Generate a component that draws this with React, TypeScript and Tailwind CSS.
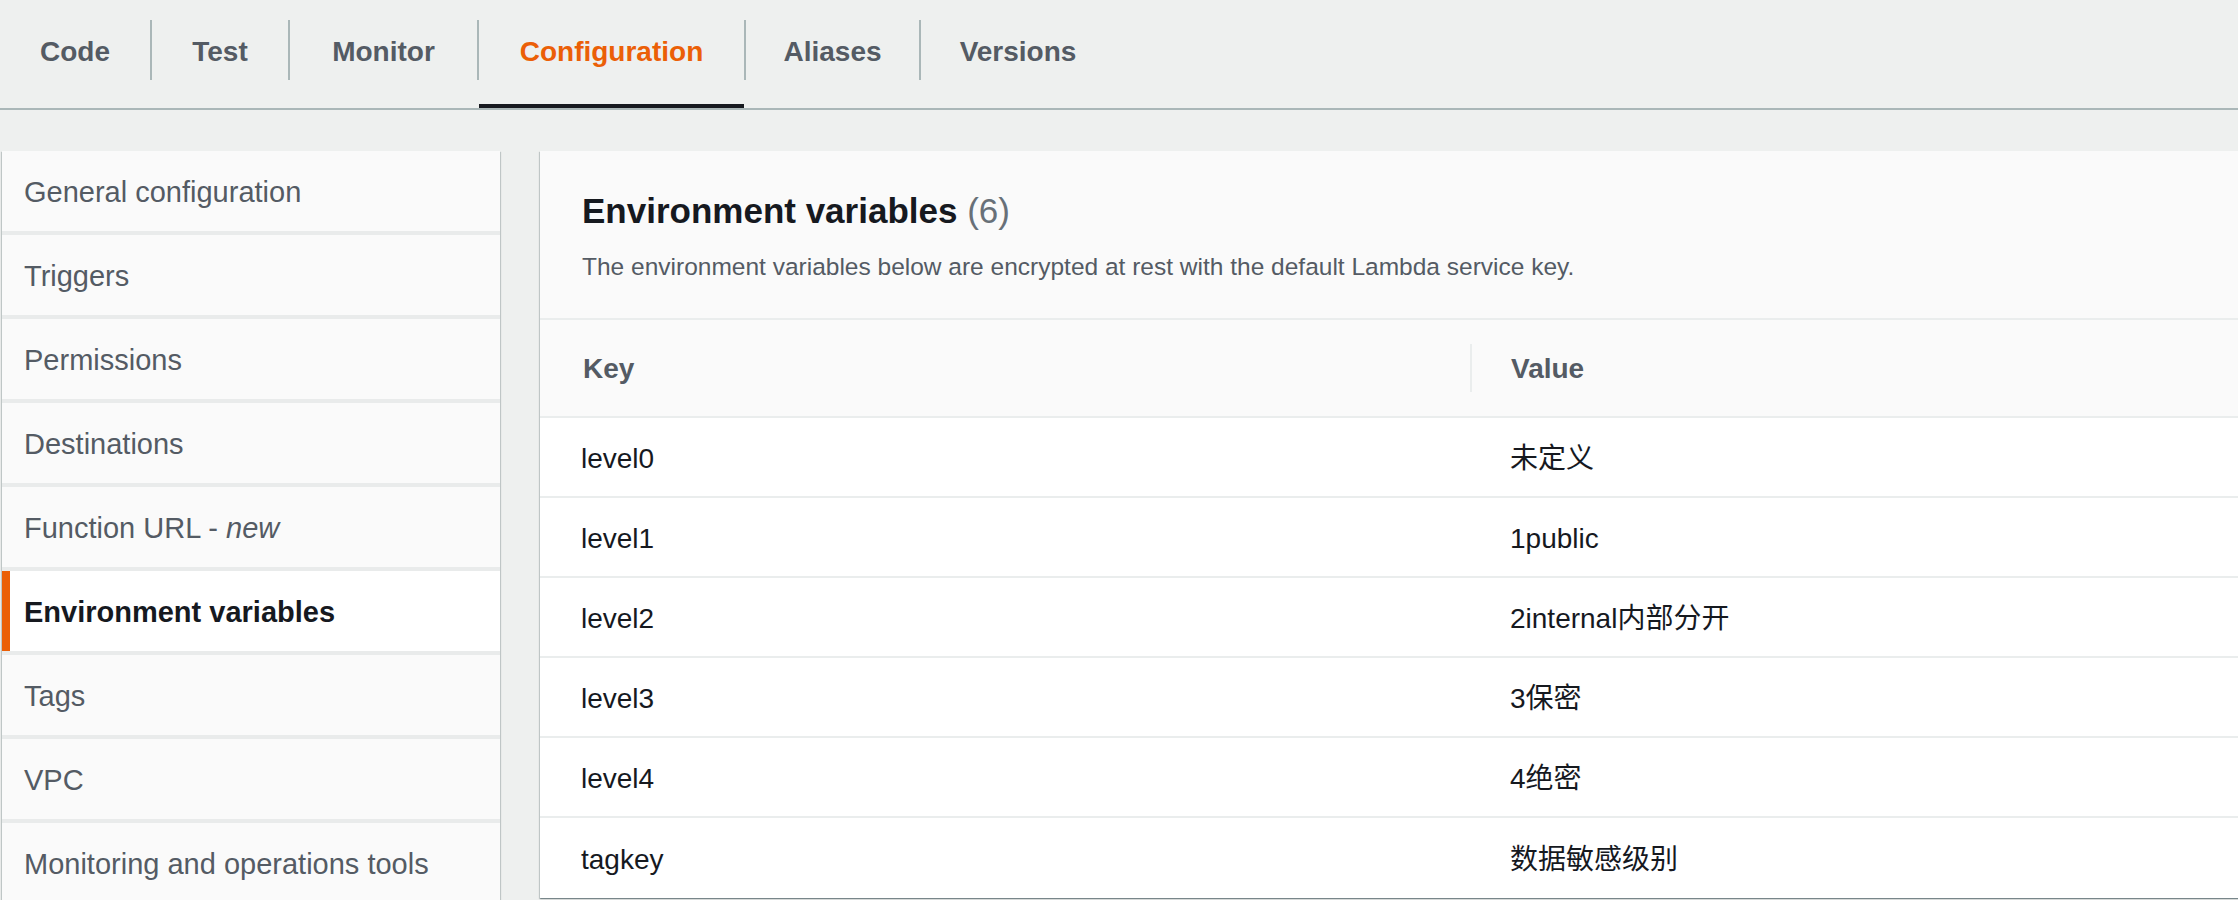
// App.tsx
const tabs = [
  { label: 'Code', w: 'w-[150px]' },
  { label: 'Test', w: 'w-[136px]' },
  { label: 'Monitor', w: 'w-[187px]' },
  { label: 'Configuration', w: 'w-[265px]', active: true },
  { label: 'Aliases', w: 'w-[173px]' },
  { label: 'Versions', w: 'w-[194px]' },
];

const menu = [
  'General configuration',
  'Triggers',
  'Permissions',
  'Destinations',
  'Function URL',
  'Environment variables',
  'Tags',
  'VPC',
  'Monitoring and operations tools',
];

const envVars = [
  { key: 'level0', value: '未定义' },
  { key: 'level1', value: '1public' },
  { key: 'level2', value: '2internal内部分开' },
  { key: 'level3', value: '3保密' },
  { key: 'level4', value: '4绝密' },
  { key: 'tagkey', value: '数据敏感级别' },
];

const panelShadow =
  'shadow-[0_1px_1px_0_rgba(0,28,36,0.3),1px_1px_1px_0_rgba(0,28,36,0.15),-1px_1px_1px_0_rgba(0,28,36,0.15)]';

function TabBar() {
  return (
    <div className="flex h-[110px] border-b-2 border-[#aab7b8]">
      {tabs.map((tab, idx) => (
        <div key={tab.label} className="flex h-full">
          {idx > 0 && <div className="mt-[20px] h-[60px] w-[2px] bg-[#aab7b8]" />}
          <div className={`flex h-full flex-col ${tab.w}`}>
            <div
              className={`flex flex-1 items-center justify-center pb-[1px] text-[28px] font-bold ${
                tab.active ? 'text-[#eb5f07]' : 'text-[#545b64]'
              }`}
            >
              {tab.label}
            </div>
            <div className={`h-[4px] ${tab.active ? 'bg-[#16191f]' : ''}`} />
          </div>
        </div>
      ))}
    </div>
  );
}

function SideMenu() {
  return (
    <div className={`flex w-[498px] shrink-0 flex-col gap-[4px] self-start bg-[#e9ebeb] ${panelShadow}`}>
      {menu.map((item) => {
        const active = item === 'Environment variables';
        return (
          <div
            key={item}
            className={`flex h-[80px] shrink-0 items-center ${
              active ? 'bg-white' : 'bg-[#fafafa]'
            }`}
          >
            <div className={`h-full w-[8px] ${active ? 'bg-[#eb5f07]' : ''}`} />
            <span
              className={`pt-[3px] pl-[14px] text-[29px] ${
                active ? 'font-bold text-[#16191f]' : 'text-[#545b64]'
              }`}
            >
              {item}
              {item === 'Function URL' && (
                <>
                  {' - '}
                  <i>new</i>
                </>
              )}
            </span>
          </div>
        );
      })}
    </div>
  );
}

function EnvTable() {
  return (
    <div className={`w-[1720px] shrink-0 self-start bg-white ${panelShadow}`}>
      <div className="border-b-2 border-[#eaeded] bg-[#fafafa] px-[42px] pt-[38px] pb-[35px]">
        <h2 className="text-[35px] leading-[44px] font-bold text-[#16191f]">
          Environment variables <span className="font-normal text-[#687078]">(6)</span>
        </h2>
        <p className="mt-[18px] text-[24.5px] leading-[32px] text-[#545b64]">
          The environment variables below are encrypted at rest with the default Lambda service key.
        </p>
      </div>
      <div className="flex h-[98px] items-center border-b-2 border-[#eaeded] bg-[#fafafa] text-[28px] font-bold text-[#545b64]">
        <div className="w-[930px] pt-[2px] pl-[43px]">Key</div>
        <div className="h-[48px] w-[2px] bg-[#eaeded]" />
        <div className="pt-[2px] pl-[39px]">Value</div>
      </div>
      {envVars.map((row, idx) => (
        <div
          key={row.key}
          className={`flex h-[80px] items-center pt-[4px] text-[28px] text-[#16191f] ${
            idx < envVars.length - 1 ? 'border-b-2 border-[#eaeded]' : ''
          }`}
        >
          <div className="w-[932px] pl-[41px]">{row.key}</div>
          <div className="pl-[38px]">{row.value}</div>
        </div>
      ))}
    </div>
  );
}

export default function App() {
  return (
    <div className="h-[900px] w-full overflow-hidden bg-[#eef0ef] font-['Liberation_Sans','Noto_Sans_CJK_SC',sans-serif]">
      <TabBar />
      <div className="flex gap-[40px] pt-[41px] pl-[2px]">
        <SideMenu />
        <EnvTable />
      </div>
    </div>
  );
}
